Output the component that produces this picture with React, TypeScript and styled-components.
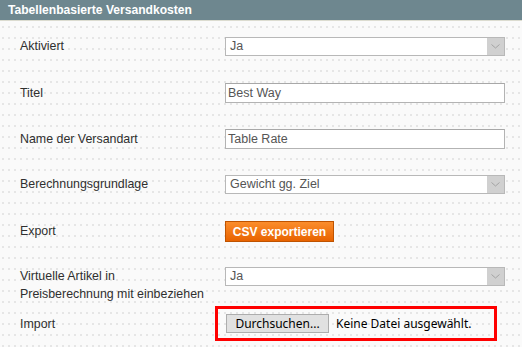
import styled, {createGlobalStyle} from "styled-components";

const GlobalStyle = createGlobalStyle`
  html, body {
    margin: 0;
    padding: 0;
    background: #fafafa;
  }
  body {
    font-family: "Liberation Sans", Arial, sans-serif;
    font-size: 12px;
    color: #2f2f2f;
  }
`;

const Fieldset = styled.div`
  width: 522px;
  height: 347px;
  overflow: hidden;
  background-color: #fafafa;
  background-image: radial-gradient(circle at 1px 1px, #dedede 0.6px, transparent 0.95px);
  background-size: 6px 11px;
  background-position: 2px 4px;
`;

const Header = styled.div`
  height: 20px;
  line-height: 20px;
  padding: 0 8px;
  background: #6e878f;
  border-bottom: 1px solid #dcdcd0;
  color: #fff;
  font-weight: bold;
  font-size: 12.1px;
`;

const Form = styled.div`
  display: flex;
  flex-direction: column;
  padding: 16px 0 0 20px;
`;

const Row = styled.div<{$top?: number}>`
  display: grid;
  grid-template-columns: 205px 280px;
  align-items: start;
  min-height: 46px;
  padding-top: ${(p) => p.$top ?? 0}px;
`;

const Label = styled.div<{$lh?: number}>`
  line-height: ${(p) => p.$lh ?? 19}px;
  font-size: 12.4px;
  color: #2f2f2f;
`;

const SelectBox = styled.div`
  display: flex;
  height: 19px;
  box-sizing: border-box;
  border: 1px solid #b8b8b8;
  background: #fff;
`;

const SelectValue = styled.span`
  flex: 1;
  padding-left: 4px;
  line-height: 17px;
  color: #555;
  font-size: 12.5px;
`;

const SelectArrow = styled.span`
  width: 17px;
  display: flex;
  align-items: center;
  justify-content: center;
  background: #d0d0d0;
`;

const TextInput = styled.div`
  height: 20px;
  box-sizing: border-box;
  border: 1px solid #b3b3b3;
  border-top-color: #a8a8a8;
  background: #fff;
  padding-left: 2px;
  line-height: 18px;
  color: #555;
  font-size: 12.5px;
`;

const OrangeButton = styled.button`
  width: 109px;
  height: 21px;
  padding: 0;
  border: 1px solid #bf5300;
  background: linear-gradient(#fb8d2c, #e86300);
  color: #fff;
  font-family: "Liberation Sans", Arial, sans-serif;
  font-weight: bold;
  font-size: 12px;
  text-align: center;
  cursor: pointer;
`;

const FileBox = styled.div`
  display: flex;
  align-items: center;
  gap: 7px;
  width: 282px;
  height: 35px;
  box-sizing: border-box;
  margin: -9px 0 0 -10px;
  padding: 0 8px;
  border: 3px solid #ff0000;
  font-family: "Noto Sans", "DejaVu Sans", sans-serif;
  font-size: 12px;
  color: #000;
`;

const BrowseButton = styled.button`
  width: 103px;
  height: 19px;
  padding: 0;
  border: 1px solid #adadad;
  background: #e1e1e1;
  font-family: "Noto Sans", "DejaVu Sans", sans-serif;
  font-size: 12px;
  color: #000;
  line-height: 17px;
`;

const Chevron = () => (
  <svg width="9" height="5" viewBox="0 0 9 5">
    <path d="M0.5 0.5 L4.5 4 L8.5 0.5" fill="none" stroke="#a3a3a3" strokeWidth="1" />
  </svg>
);

const Select = ({value}: {value: string}) => (
  <SelectBox>
    <SelectValue>{value}</SelectValue>
    <SelectArrow>
      <Chevron />
    </SelectArrow>
  </SelectBox>
);

export default function App() {
  return (
    <>
      <GlobalStyle />
      <Fieldset>
        <Header>Tabellenbasierte Versandkosten</Header>
        <Form>
          <Row>
            <Label>Aktiviert</Label>
            <Select value="Ja" />
          </Row>
          <Row>
            <Label $lh={20}>Titel</Label>
            <TextInput>Best Way</TextInput>
          </Row>
          <Row>
            <Label $lh={20}>Name der Versandart</Label>
            <TextInput>Table Rate</TextInput>
          </Row>
          <Row>
            <Label>Berechnungsgrundlage</Label>
            <Select value="Gewicht gg. Ziel" />
          </Row>
          <Row>
            <Label $lh={21}>Export</Label>
            <div>
              <OrangeButton>CSV exportieren</OrangeButton>
            </div>
          </Row>
          <Row>
            <Label $lh={18}>
              Virtuelle Artikel in
              <br />
              Preisberechnung mit einbeziehen
            </Label>
            <Select value="Ja" />
          </Row>
          <Row $top={2}>
            <Label>Import</Label>
            <FileBox>
              <BrowseButton>Durchsuchen...</BrowseButton>
              <span>Keine Datei ausgewählt.</span>
            </FileBox>
          </Row>
        </Form>
      </Fieldset>
    </>
  );
}
